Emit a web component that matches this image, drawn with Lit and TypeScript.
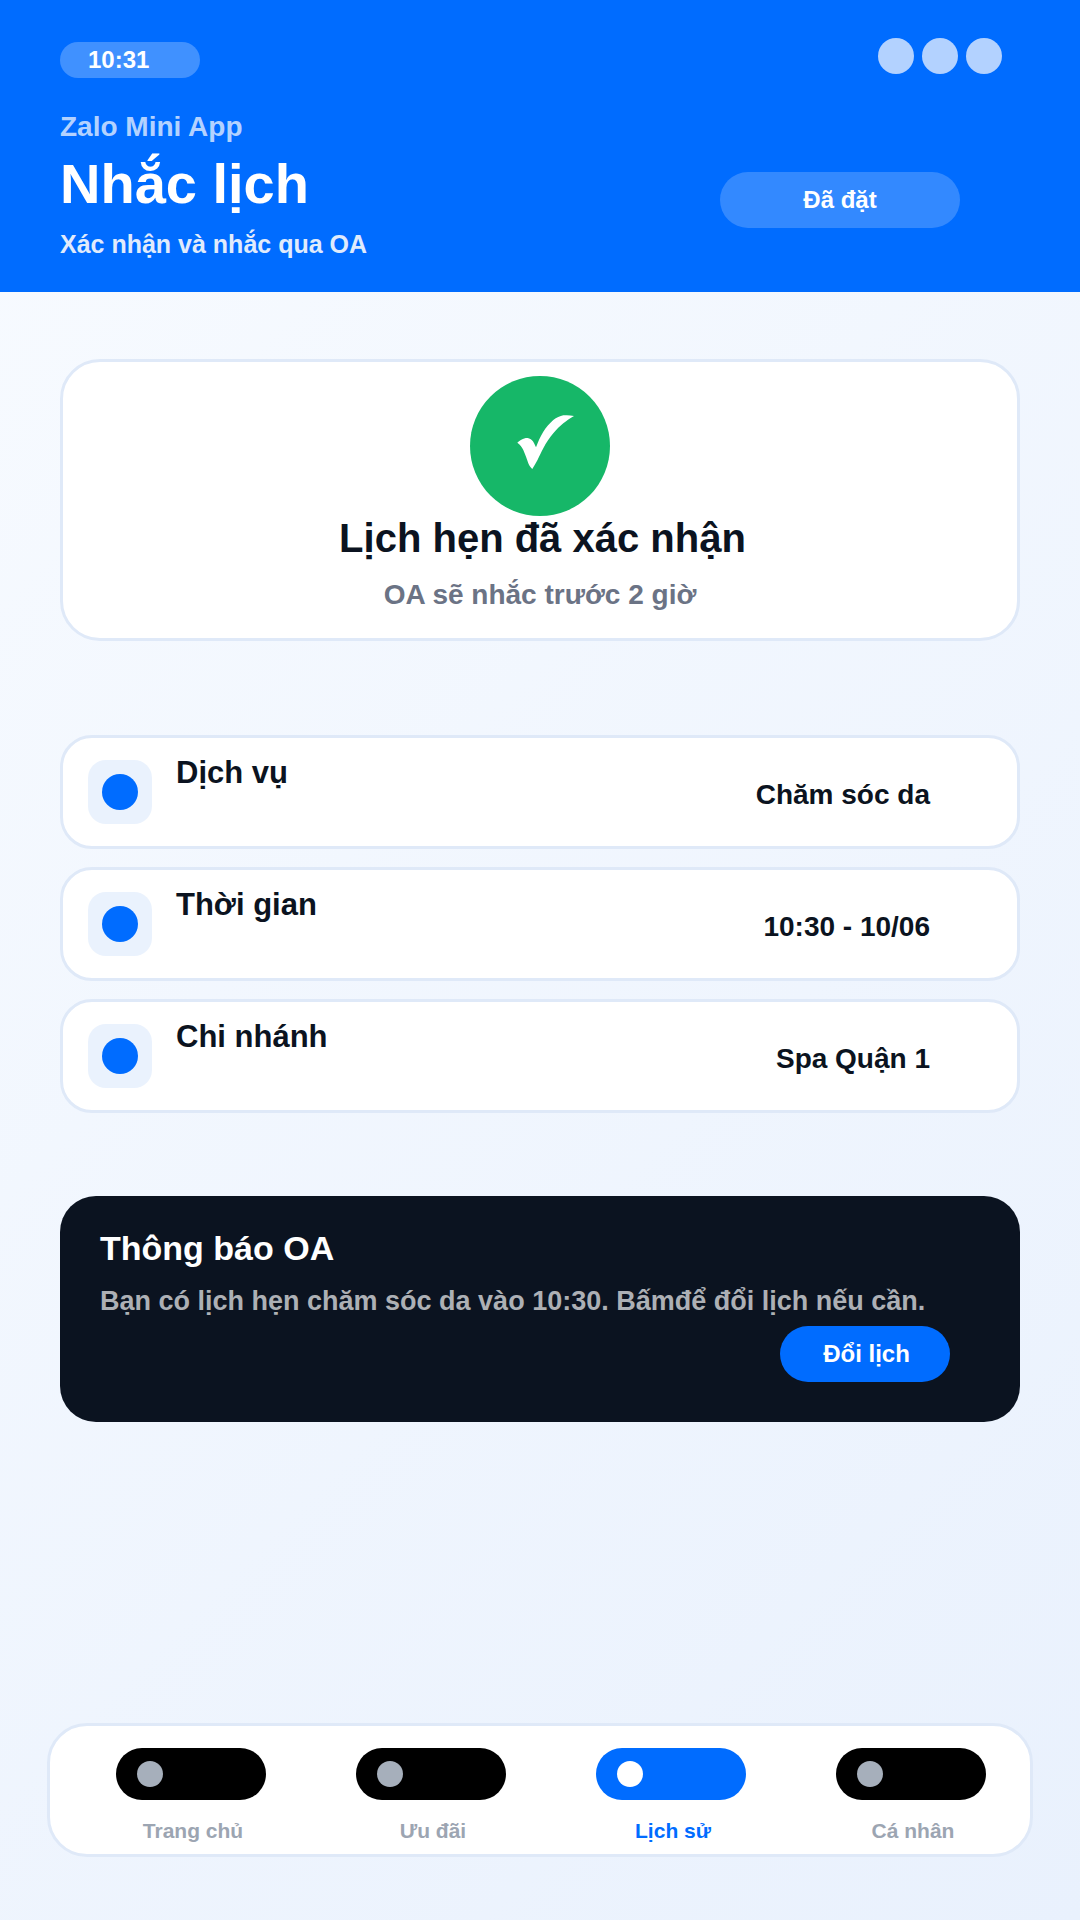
import { LitElement, html, css } from 'lit'
import { customElement } from 'lit/decorators.js'

const rows = [
  { label: 'Dịch vụ', value: 'Chăm sóc da' },
  { label: 'Thời gian', value: '10:30 - 10/06' },
  { label: 'Chi nhánh', value: 'Spa Quận 1' },
]

const tabs = [
  { label: 'Trang chủ', active: false },
  { label: 'Ưu đãi', active: false },
  { label: 'Lịch sử', active: true },
  { label: 'Cá nhân', active: false },
]

@customElement('app-root')
export class AppRoot extends LitElement {
  static styles = css`
    :host {
      display: flex;
      flex-direction: column;
      width: 1080px;
      height: 1920px;
      background: linear-gradient(135deg, #f8fbff 0%, #e9f1fd 100%);
      font-family: 'Liberation Sans', Arial, sans-serif;
      font-weight: 700;
      color: #0b1320;
    }
    .header {
      display: flex;
      flex-direction: column;
      height: 292px;
      box-sizing: border-box;
      padding: 38px 78px 0 60px;
      background: #006cff;
      color: #fff;
    }
    .status {
      display: flex;
      justify-content: space-between;
      align-items: flex-start;
    }
    .time {
      width: 140px;
      height: 36px;
      margin-top: 4px;
      box-sizing: border-box;
      padding-left: 28px;
      border-radius: 18px;
      background: rgba(255, 255, 255, 0.25);
      font-size: 24px;
      line-height: 36px;
    }
    .dots {
      display: flex;
      gap: 8px;
    }
    .dots span {
      width: 36px;
      height: 36px;
      border-radius: 50%;
      background: #b3d2ff;
    }
    .head-main {
      display: flex;
      justify-content: space-between;
      align-items: flex-start;
      margin-top: 33px;
    }
    .brand {
      font-size: 28px;
      line-height: 32px;
      color: #b3d2ff;
    }
    h1 {
      margin: 9px 0 0;
      font-size: 56px;
      line-height: 64px;
    }
    .tagline {
      margin-top: 12px;
      font-size: 25px;
      line-height: 32px;
      color: #e0ebfc;
    }
    .booked {
      width: 240px;
      height: 56px;
      margin: 61px 42px 0 0;
      border-radius: 28px;
      background: rgba(255, 255, 255, 0.2);
      font-size: 24px;
      line-height: 56px;
      text-align: center;
    }
    .main {
      display: flex;
      flex-direction: column;
      padding: 67px 60px 0;
    }
    .hero {
      display: flex;
      flex-direction: column;
      align-items: center;
      height: 282px;
      box-sizing: border-box;
      padding-top: 14px;
      border: 3px solid #dfe9f8;
      border-radius: 40px;
      background: #fff;
    }
    .check {
      width: 140px;
      height: 140px;
      border-radius: 50%;
      background: #16b768;
    }
    .check svg {
      display: block;
      fill: #fff;
    }
    .hero h2 {
      margin: -2px 0 0;
      padding-left: 5px;
      font-size: 40px;
      line-height: 48px;
    }
    .hero p {
      margin: 16px 0 0;
      font-size: 28px;
      line-height: 34px;
      color: #6b7385;
    }
    .rows {
      display: flex;
      flex-direction: column;
      gap: 18px;
      margin-top: 94px;
    }
    .row {
      display: flex;
      align-items: flex-start;
      height: 114px;
      box-sizing: border-box;
      padding: 22px 87px 0 25px;
      border: 3px solid #dfe9f8;
      border-radius: 32px;
      background: #fff;
    }
    .row-icon {
      display: flex;
      align-items: center;
      justify-content: center;
      width: 64px;
      height: 64px;
      border-radius: 18px;
      background: #eaf2fd;
    }
    .row-icon span {
      width: 36px;
      height: 36px;
      border-radius: 50%;
      background: #006cff;
    }
    .row-label {
      flex: 1;
      margin: -5px 0 0 24px;
      font-size: 31px;
      line-height: 36px;
    }
    .row-value {
      margin-top: 18px;
      font-size: 28px;
      line-height: 34px;
    }
    .notice {
      display: flex;
      flex-direction: column;
      height: 226px;
      box-sizing: border-box;
      margin-top: 83px;
      padding: 32px 70px 0 40px;
      border-radius: 36px;
      background: #0b1320;
      color: #fff;
    }
    .notice h3 {
      margin: 0;
      font-size: 34px;
      line-height: 40px;
    }
    .notice p {
      margin: 16px 0 0;
      font-size: 27px;
      line-height: 34px;
      color: #adb0b5;
      white-space: nowrap;
    }
    .change {
      align-self: flex-end;
      width: 170px;
      height: 56px;
      box-sizing: border-box;
      margin-top: 8px;
      padding-left: 3px;
      border-radius: 28px;
      background: #006cff;
      font-size: 24px;
      line-height: 56px;
      text-align: center;
    }
    .nav {
      display: grid;
      grid-template-columns: repeat(4, 240px);
      height: 134px;
      box-sizing: border-box;
      margin: auto 47px 63px;
      padding: 22px 0 0 21px;
      border: 3px solid #dfe9f8;
      border-radius: 40px;
      background: #fff;
    }
    .tab {
      display: flex;
      flex-direction: column;
      align-items: center;
      font-size: 21px;
      color: #9ca5b2;
    }
    .tab.active {
      color: #006cff;
    }
    .pill {
      display: flex;
      align-items: center;
      width: 150px;
      height: 52px;
      box-sizing: border-box;
      padding-left: 21px;
      border-radius: 26px;
      background: #000;
    }
    .tab.active .pill {
      background: #006cff;
    }
    .pill span {
      width: 26px;
      height: 26px;
      border-radius: 50%;
      background: #a6afbb;
    }
    .tab.active .pill span {
      background: #fff;
    }
    .tab-label {
      margin: 18px 0 0 4px;
      line-height: 26px;
    }
  `

  render() {
    return html`
      <header class="header">
        <div class="status">
          <div class="time">10:31</div>
          <div class="dots"><span></span><span></span><span></span></div>
        </div>
        <div class="head-main">
          <div>
            <div class="brand">Zalo Mini App</div>
            <h1>Nhắc lịch</h1>
            <div class="tagline">Xác nhận và nhắc qua OA</div>
          </div>
          <div class="booked">Đã đặt</div>
        </div>
      </header>
      <main class="main">
        <section class="hero">
          <div class="check">
            <svg width="140" height="140" viewBox="0 0 140 140">
              <path
                d="M104 40C100 39 96.500 39 93.300 39.300C90 40 86.500 41.500 83.300 44C79.500 47.500 76 51.500 73.300 55.700C70 61 68 66 66 71.300C64.500 68 63.500 65.500 61.700 64C59.500 62.300 57 61.800 55 62.300C52 63 49.500 65 47.300 66.700C50 68.500 52 71 53.300 74C55.500 79 57 83.500 58.300 87.300C59.500 90 61 92 62.300 93C64 90 66 87 67.500 84C69.500 80 71 76.500 73.300 72.300C76 67 79.500 62 83.300 57.300C86.500 53.500 90 50 93.300 47.300C96.500 44.800 100 42 104 40Z"
              ></path>
            </svg>
          </div>
          <h2>Lịch hẹn đã xác nhận</h2>
          <p>OA sẽ nhắc trước 2 giờ</p>
        </section>
        <section class="rows">
          ${rows.map(
            (r) => html`
              <div class="row">
                <div class="row-icon"><span></span></div>
                <div class="row-label">${r.label}</div>
                <div class="row-value">${r.value}</div>
              </div>
            `,
          )}
        </section>
        <section class="notice">
          <h3>Thông báo OA</h3>
          <p>Bạn có lịch hẹn chăm sóc da vào 10:30. Bấmđể đổi lịch nếu cần.</p>
          <div class="change">Đổi lịch</div>
        </section>
      </main>
      <nav class="nav">
        ${tabs.map(
          (t) => html`
            <div class="tab ${t.active ? 'active' : ''}">
              <div class="pill"><span></span></div>
              <div class="tab-label">${t.label}</div>
            </div>
          `,
        )}
      </nav>
    `
  }
}
